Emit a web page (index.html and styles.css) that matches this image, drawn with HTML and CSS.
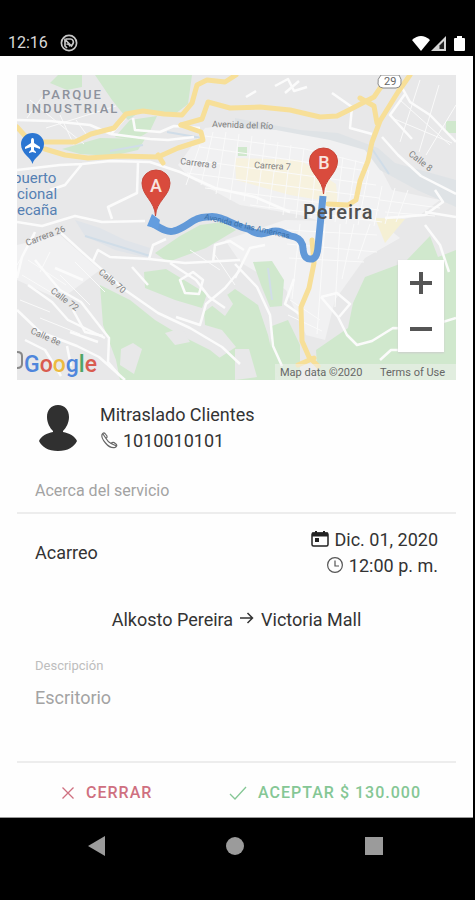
FILE: index.html
```html
<!DOCTYPE html>
<html lang="es">
<head>
<meta charset="utf-8">
<meta name="viewport" content="width=device-width, initial-scale=1">
<title>Detalle del servicio</title>
<link rel="stylesheet" href="styles.css">
</head>
<body>
<header class="status">
  <time>12:16</time>
  <svg width="18" height="18" viewBox="0 0 18 18" fill="none" stroke="#c8c8c8"><circle cx="9" cy="9" r="7.600" stroke-width="1.700"/><path d="M5 4.500v7.500l2 2M6 5h4.500a3 3 0 0 1 2.500 4.500l-1.500 2.500L5.500 6" stroke-width="1.700"/><path d="M6.500 10.500c1.500-1 3 0 3.500 2" stroke-width="1.500"/></svg>
  <span class="signals">
    <svg width="18" height="15" viewBox="0 0 18 15" fill="#fff"><path d="M0 4Q9-4 18 4L9 15z"/></svg>
    <svg width="16" height="15" viewBox="0 0 16 15"><path d="M0 15L15 0v15z" fill="#d5d5d5"/><path d="M8.500 13V9.500L13 5v8z" fill="#222"/></svg>
    <svg class="battery" width="11" height="15" viewBox="0 0 11 15" fill="#fff"><path d="M3 2V0h5v2h2q1 0 1 1v11q0 1-1 1H1q-1 0-1-1V3q0-1 1-1z"/></svg>
  </span>
</header>

<main class="sheet">
  <section class="map" aria-label="Mapa">
    <svg class="map-art" viewBox="17 75 439 305">
      <rect x="17" y="75" width="439" height="305" fill="#e8e8e9"/>
      <!-- dense town blocks -->
      <g fill="#f1f1f2">
        <path d="M205 128L240 124 310 133 370 148 392 190 440 200 420 215 380 225 330 224 300 215 240 205 190 178 178 165z"/>
        <path d="M285 220L380 222 400 238 365 258 335 300 325 340 306 335 286 290 240 262 225 240z"/>
        <path d="M17 245L60 235 100 270 60 300 17 280z"/>
      </g>
      <path d="M235 158L300 160 336 184 338 203 290 195 236 180z" fill="#f7f2df"/>
      <path d="M375 218L405 219 385 243z" fill="#f5f0d4"/>
      <!-- parks -->
      <g fill="#d0e8cd">
        <path d="M95 75H192L188 104 175 114 140 112 128 120 112 100z"/>
        <path d="M50 83L58 75H82V87L67 90z"/>
        <path d="M115 137L130 120 157 116 150 131 135 140z"/>
        <path d="M62 149L100 138 145 139 138 150 112 156 80 154z"/>
        <path d="M155 253L180 236 200 225 222 222 236 230 206 248 168 262z"/>
        <path d="M144 272L166 269 207 294 202 308 175 300 145 288z"/>
        <path d="M100 285L130 300 155 320 180 335 210 350 225 362 225 380H120L116 360 103 325z"/>
        <path d="M204 312L235 289 258 305 268 335 278 380H208L216 360 236 347 222 330 205 325z"/>
        <path d="M253 262L272 261 284 280 282 306 270 307 261 285z"/>
        <path d="M272 326L288 320 300 345 300 380H278L270 350z"/>
        <path d="M353 303L365 277 405 262 430 236 438 257 456 250V380H318L316 350 348 328z"/>
        <path d="M238 147h9v9h-9zM446 121h10v12h-10zM445 185l11-3v17l-9-2z"/>
      </g>
      <g fill="#e8e8e9">
        <path d="M121 349l12-6 9 6-8 25-14-9z"/>
        <path d="M235 349l14 0 8 28-22 3z"/>
        <path d="M165 333l17-5 8 14-15 3z"/>
        <path d="M205 300l18-12 10 16-8 12z"/>
      </g>
      <!-- river -->
      <path d="M235 118L300 130 338 133 378 148 395 163 456 180V207L417 190 380 170 365 150 330 140 276 130 235 128z" fill="#dfe3e6"/>
      <path d="M75 220L100 228 125 240 150 248 148 258 115 250 85 236z" fill="#e0e4e9"/>
      <g fill="none" stroke="#d0dde8" stroke-width="2">
        <path d="M167 132L202 138M110 151L143 145M370 146L389 174M85 236L150 256M268 268L272 300"/>
      </g>
      <!-- street grid -->
      <g fill="none" stroke="#fafafa" stroke-width="1">
        <path d="M200 145l-14 40M213 132l-12 53M226 132l-10 62M239 134l-9 66M252 136l-8 65M265 139l-8 65M278 142l-9 67M291 145l-8 70M304 148l-8 70M317 150l-6 68M330 153l-8 68M343 157l-8 65M356 160l-10 64M369 170l-11 55M382 186l-8 40M395 188l-10 36M408 190l-12 32"/>
        <path d="M205 136l100 13 62 15M200 147l168 24M192 160l184 25M187 173l192 25M205 188l174 22M250 205l132 17M287 230l90 5M287 244l90 8M289 258l75 4M300 224l-8 75M325 224l-8 110M340 224l-5 83M354 224l-12 55M370 224l-12 35"/>
        <path d="M60 115l14 30M76 120l13 18M46 128l70-22M30 100l54 44M47 90l-20 28M28 260l38 25M22 275l30 18M35 235l-18 30M50 252l-10 20M400 100l50 45M392 118l60 25M420 80l-20 62M439 85l-20 67M456 105l-30 50"/>
        <path d="M380 200l60 8M385 212l50 4M215 255l20 30M190 250l30 20M20 300l30 12M40 318l40 16M60 275l30 30M75 262l30 30M290 300l30 20M288 315l34 16"/>
      </g>
      <!-- minor roads -->
      <g fill="none" stroke="#fbfbfb" stroke-width="2.500" stroke-linejoin="round">
        <path d="M17 120L50 121 90 125 111 134M111 134L125 118M133 118L135 130 160 132 174 126 200 128M111 134L150 139 168 140 194 137"/>
        <path d="M17 170L60 165 82 164 110 161 150 162 180 172 215 188 255 197 290 212M82 164L65 185 50 190"/>
        <path d="M138 163L137 193 108 207 112 219M17 222L42 226 75 216 102 222 145 221"/>
        <path d="M60 232L82 252 125 290 158 313 190 328 222 347 240 364M35 260L60 290 81 302 109 338 108 362 119 375"/>
        <path d="M17 310L40 332 77 346 99 357 125 380M35 232L22 257 17 278M93 261L98 250 110 257 149 259 153 245 166 239"/>
        <path d="M149 259L185 263 240 260M170 263L196 280 209 297 225 308M240 270L225 288 206 304 200 325 176 317M213 262L215 245 230 241 244 250"/>
        <path d="M55 268L83 280M28 285L52 302 68 320 105 338M70 332L98 342M132 267L148 285"/>
        <path d="M235 264L257 287 270 315 273 346 282 366M321 297L338 317 347 335 357 345 372 341 393 328 420 329 456 318M425 225L440 245 449 272M380 360L391 350 440 350"/>
        <path d="M321 297L337 293 350 304 339 317M294 279L285 304 301 315M265 245L250 248 235 278M332 93L352 107 350 128 372 134M395 75L410 102 430 115 456 142M382 137L398 155 421 176 456 194"/>
        <path d="M405 94L390 115 412 139M435 190L443 202 425 215 385 218M425 212L456 217"/>
        <path d="M275 86l13-7 6 12 13-4M285 93l14-12M246 97l10-6M25 340l20 10 16 26M71 366l-4-20M73 310l12 22 18 4M180 280l13-8 10 8-4 14-14-1z"/>
      </g>
      <!-- highways -->
      <g fill="none" stroke="#f7df98" stroke-width="5" stroke-linejoin="round" stroke-linecap="round">
        <path d="M17 127L26 137 42 142 75 142 91 134 114 128 126 114 143 111 164 114 182 115 192 103 197 85 207 80 225 82 236 75"/>
        <path d="M181 125L202 119 208 102 230 108 260 107 290 110 320 117 337 116 351 109 374 97 389 75"/>
        <path d="M181 125L201 132 203 140 178 148 158 157 120 156 88 158 65 155 45 149M158 155L163 163"/>
        <path d="M410 75L398 92 380 121 372 142 368 161 360 181 356 200 348 205 328 204M360 98L374 106 377 123"/>
        <path d="M312 240L314 263 309 288 301 307 302 341 309 357 318 366M298 365L314 358"/>
      </g>
      <path d="M150 222C162 229 168 233 174 231C187 228 194 216 208 217C222 214 237 228 248 229C258 236 264 234 270 232C280 228 286 236 295 237Q303 240 303 249Q304 259 310 259Q317 260 318 247L323 196" fill="none" stroke="#6299d8" stroke-width="7" stroke-linejoin="round"/>
      <path d="M147 226l5-12 8 6-2 9z" fill="#639ddf"/>

      <g class="label-small">
        <text x="212" y="127" transform="rotate(2 212 127)">Avenida del Río</text>
        <text x="180" y="164" transform="rotate(7 180 164)">Carrera 8</text>
        <text x="254" y="168" transform="rotate(3 254 168)">Carrera 7</text>
        <text x="408" y="155" transform="rotate(38 408 155)">Calle 8</text>
        <text x="27" y="246" transform="rotate(-21 27 246)">Carrera 26</text>
        <text x="98" y="273" transform="rotate(40 98 273)">Calle 70</text>
        <text x="50" y="292" transform="rotate(37 50 292)">Calle 72</text>
        <text x="30" y="333" transform="rotate(24 30 333)">Calle 8e</text>
        <text class="on-route" x="204" y="219" transform="rotate(13 204 219)">Avenida de las Américas</text>
      </g>
      <g class="label-area">
        <text x="42" y="99">PARQUE</text>
        <text x="26" y="113">INDUSTRIAL</text>
      </g>
      <g class="label-airport">
        <text x="13" y="183">puerto</text>
        <text x="17" y="199">cional</text>
        <text x="17" y="215">ecaña</text>
      </g>
      <text class="label-city" x="303" y="219">Pereira</text>

      <path d="M381 75h18q3 4 2 9-1 4-5 4h-13q-4 0-5-4-1-5 3-9z" fill="#fff" stroke="#888"/>
      <text class="label-shield" x="384" y="85">29</text>

      <path d="M32.500 164C31 157 21 154 21 144a11.500 11 0 0 1 23 0c0 10-10 13-11.500 20z" fill="#2b76d2"/>
      <path d="M32.500 138q1.500 0 1.500 3v2l6 4v2l-6-2v3l2 2v1l-3.500-1-3.500 1v-1l2-2v-3l-6 2v-2l6-4v-2q0-3 1.500-3z" fill="#fff"/>

      <g fill="#d94b3d" stroke="#c8473a">
        <path d="M155.500 216C155 201 142 196 142 183a14 13 0 0 1 28 0c0 13-14 18-14.500 33z"/>
        <path d="M323.500 194C323 179 309.500 174 309.500 161a14 13 0 0 1 28 0c0 13-13.500 18-14 33z"/>
      </g>
      <g class="label-pin">
        <text x="156" y="192">A</text>
        <text x="324" y="169">B</text>
      </g>

      <path d="M17 352q5 0 5 4v8q0 4-5 4" fill="none" stroke="#888" stroke-width="2"/>
      <rect x="275" y="364" width="181" height="16" fill="#f1f1f1" opacity=".5"/>
      <text class="label-brand" x="24" y="372"><tspan fill="#4f86dc">G</tspan><tspan fill="#d95c50">o</tspan><tspan fill="#ecba3f">o</tspan><tspan fill="#4f86dc">g</tspan><tspan fill="#4fa566">l</tspan><tspan fill="#d95c50">e</tspan></text>
      <g class="label-legal">
        <text x="280" y="376">Map data ©2020</text>
        <text x="380" y="376">Terms of Use</text>
      </g>
    </svg>
    <div class="zoom">
      <button type="button" aria-label="Acercar"><svg width="22" height="22" viewBox="0 0 22 22"><path d="M0 11h22M11 0v22" stroke="#555" stroke-width="4"/></svg></button>
      <button type="button" aria-label="Alejar"><svg width="22" height="22" viewBox="0 0 22 22"><path d="M0 11h22" stroke="#555" stroke-width="4"/></svg></button>
    </div>
  </section>

  <section class="contact">
    <svg width="38" height="46" viewBox="0 0 38 46" fill="#303030"><path d="M19 0C26 0 30 5 30 12c0 6-3 11-6 14v1c6 1 12 4 14 9-3 6-9 10-19 10S3 42 0 36c2-5 8-8 14-9v-1c-3-3-6-8-6-14C8 5 12 0 19 0z"/></svg>
    <div>
      <p>Mitraslado Clientes</p>
      <p class="line"><svg width="18" height="18" viewBox="0 0 18 18" fill="none" stroke="#666" stroke-width="1.200" stroke-linejoin="round"><path d="M2 2.500Q3.500 0 5 1.500L7 4Q7.500 5.500 6 6.500 8 10 11 11.500 12.500 10 14 10.500L16.500 12.500Q17.500 14 15 15.500 10 16.500 5.500 11 1 6 2 2.500zM3 2L6 6.500M11 11.500L16.500 14"/></svg>1010010101</p>
    </div>
  </section>

  <h2 class="heading">Acerca del servicio</h2>

  <section class="service">
    <p>Acarreo</p>
    <div class="when">
      <p class="line"><svg width="18" height="18" viewBox="0 0 18 18"><rect x="1" y="2" width="16" height="13" rx="1.500" fill="none" stroke="#222" stroke-width="1.500"/><path d="M1 1.500h16v4H1zM4 0h2v3H4zM12 0h2v3h-2zM4 7h4v4H4z" fill="#222"/></svg>Dic. 01, 2020</p>
      <p class="line"><svg width="18" height="18" viewBox="0 0 18 18" fill="none" stroke="#555" stroke-width="1.200"><circle cx="9" cy="8" r="7.400"/><path d="M9 3.500V9h4"/></svg>12:00 p. m.</p>
    </div>
  </section>

  <p class="route">Alkosto Pereira <svg width="14" height="18" viewBox="0 0 14 18" fill="none" stroke="#333" stroke-width="1.500"><path d="M0 7h12.500M7.500 2l5 5-5 5"/></svg> Victoria Mall</p>

  <section class="description">
    <h3>Descripción</h3>
    <p>Escritorio</p>
  </section>

  <div class="actions">
    <button type="button" class="close"><svg width="14" height="14" viewBox="0 0 14 14" fill="none" stroke="currentColor" stroke-width="1.300"><path d="M1.500 1.500l11 11M12.500 1.500l-11 11"/></svg>CERRAR</button>
    <button type="button" class="accept"><svg width="18" height="14" viewBox="0 0 18 14" fill="none" stroke="currentColor" stroke-width="1.300"><path d="M1 8l5 5L17 1"/></svg>ACEPTAR $ 130.000</button>
  </div>
</main>

<nav class="system" aria-label="Sistema">
  <button type="button" aria-label="Atrás"><svg width="20" height="20" viewBox="0 0 20 20" fill="#9b9b9b"><path d="M1 10L18 0v20z"/></svg></button>
  <button type="button" aria-label="Inicio"><svg width="20" height="20" viewBox="0 0 20 20" fill="#9b9b9b"><circle cx="10" cy="10" r="9"/></svg></button>
  <button type="button" aria-label="Recientes"><svg width="20" height="20" viewBox="0 0 20 20" fill="#9b9b9b"><path d="M1 1h18v18H1z"/></svg></button>
</nav>
</body>
</html>
```

FILE: styles.css
```css
* {
  box-sizing: border-box;
}

body {
  margin: 0;
  min-height: 100vh;
  display: flex;
  flex-direction: column;
  background: #000;
  color: #333;
  font: 18px/26px Roboto, "Liberation Sans", sans-serif;
}

p, h2, h3 {
  margin: 0;
  font-weight: 400;
}

svg {
  display: block;
  flex: none;
}

button {
  display: flex;
  align-items: center;
  justify-content: center;
  padding: 0;
  border: 0;
  background: none;
  font: inherit;
}

.status {
  display: flex;
  align-items: center;
  gap: 12px;
  padding: 30px 10px 0 8px;
  color: #d8d8d8;
  font-size: 16px;
}

.signals {
  display: flex;
  align-items: center;
  gap: 1px;
  margin-left: auto;
}

.battery {
  margin-left: 6px;
}

.sheet {
  flex: 1;
  display: flex;
  flex-direction: column;
  margin-right: 2px;
  padding: 19px 17px 0;
  border-bottom: 1px solid #999;
  background: #fefefe;
}

.map {
  position: relative;
}

.map-art {
  width: 100%;
  height: auto;
}

.label-small {
  font-size: 9px;
  fill: #808080;
}

.on-route {
  font-size: 8px;
  fill: #386fa8;
}

.label-area {
  font-size: 13px;
  font-weight: 500;
  letter-spacing: 2px;
  fill: #8d929c;
}

.label-airport {
  font-size: 15px;
  fill: #5580b3;
}

.label-city {
  font-size: 20px;
  font-weight: 500;
  letter-spacing: 1px;
  fill: #505050;
}

.label-shield {
  font-size: 11px;
  fill: #666;
}

.label-pin {
  font-size: 18px;
  font-weight: 500;
  text-anchor: middle;
  fill: #f8e4e0;
}

.label-brand {
  font-size: 23px;
  font-weight: 500;
}

.label-legal {
  font-size: 11px;
  fill: #666;
}

.zoom {
  position: absolute;
  right: 12px;
  bottom: 28px;
  display: grid;
  background: #fff;
  box-shadow: 0 1px 2px #ccc;
}

.zoom button {
  width: 46px;
  height: 46px;
}

.contact {
  display: flex;
  align-items: center;
  gap: 23px;
  padding: 22px 22px 24px;
}

.line {
  display: flex;
  align-items: center;
  gap: 5px;
}

.heading {
  padding: 0 18px 8px;
  border-bottom: 2px solid #ededed;
  color: #a3a3a3;
  font-size: 16px;
}

.service {
  display: flex;
  align-items: center;
  justify-content: space-between;
  padding: 13px 18px 28px;
}

.when {
  display: flex;
  flex-direction: column;
  align-items: flex-end;
}

.route {
  display: flex;
  align-items: center;
  justify-content: center;
  gap: 7px;
}

.description {
  padding: 20px 18px;
  color: #a3a3a3;
}

.description h3 {
  color: #bdbdbd;
  font-size: 13px;
}

.description p {
  padding-top: 6px;
}

.actions {
  display: flex;
  justify-content: space-between;
  margin-top: auto;
  padding: 17px 35px 11px 44px;
  border-top: 2px solid #ededed;
  font-size: 16px;
  font-weight: 500;
  letter-spacing: 1px;
}

.actions button {
  gap: 11px;
  letter-spacing: inherit;
}

.close {
  color: #cf7080;
}

.accept {
  color: #85c795;
}

.system {
  display: flex;
  justify-content: space-around;
  padding: 18px 32px 44px 28px;
}

.system button {
  width: 48px;
  height: 20px;
}
```
